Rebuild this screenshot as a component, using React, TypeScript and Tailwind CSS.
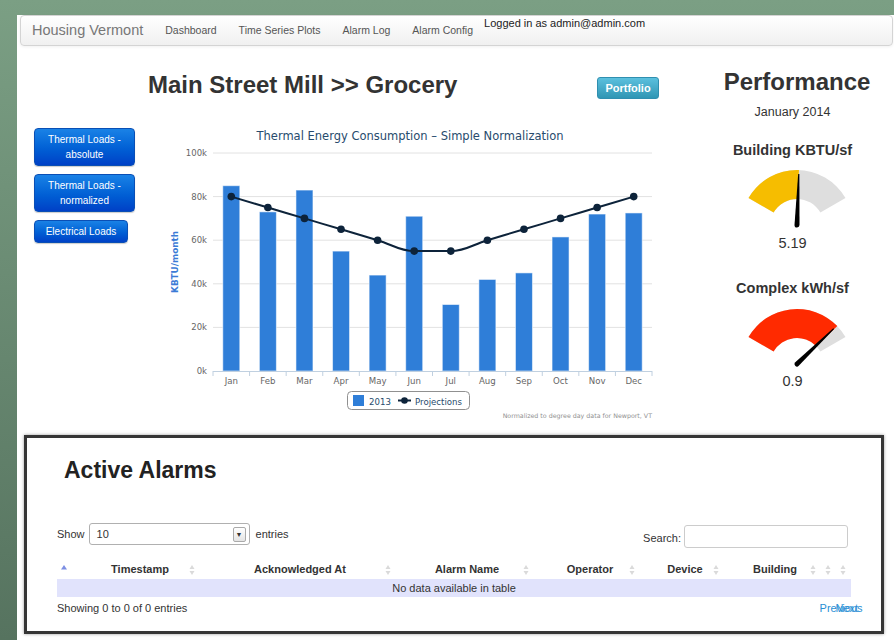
import React from 'react';

type Pt = [number, number];

const months = ['Jan', 'Feb', 'Mar', 'Apr', 'May', 'Jun', 'Jul', 'Aug', 'Sep', 'Oct', 'Nov', 'Dec'];
const usage2013 = [85, 73, 83, 55, 44, 71, 30.5, 42, 45, 61.5, 72, 72.5];
const projections = [80, 75, 70, 65, 60, 55, 55, 60, 65, 70, 75, 80];

// plot box inside the chart svg
const PL = 53;
const PR = 492;
const PB = 246;
const PX_PER_K = 2.18;
const CW = (PR - PL) / 12;

const yOf = (v: number) => PB - v * PX_PER_K;
const xOf = (i: number) => PL + CW * (i + 0.5);

// same smoothing as a highcharts spline series
const splinePath = (pts: Pt[]): string => {
    const sm = 1.5;
    const den = sm + 1;
    const conts = pts.map((p, i) => {
        const last = pts[i - 1];
        const next = pts[i + 1];
        if (!last || !next) return null;
        const lcx = (sm * p[0] + last[0]) / den;
        let lcy = (sm * p[1] + last[1]) / den;
        const rcx = (sm * p[0] + next[0]) / den;
        let rcy = (sm * p[1] + next[1]) / den;
        if (rcx !== lcx) {
            const corr = ((rcy - lcy) * (rcx - p[0])) / (rcx - lcx) + p[1] - rcy;
            lcy += corr;
            rcy += corr;
            if (lcy > last[1] && lcy > p[1]) {
                lcy = Math.max(last[1], p[1]);
                rcy = 2 * p[1] - lcy;
            } else if (lcy < last[1] && lcy < p[1]) {
                lcy = Math.min(last[1], p[1]);
                rcy = 2 * p[1] - lcy;
            }
            if (rcy > next[1] && rcy > p[1]) {
                rcy = Math.max(next[1], p[1]);
                lcy = 2 * p[1] - rcy;
            } else if (rcy < next[1] && rcy < p[1]) {
                rcy = Math.min(next[1], p[1]);
                lcy = 2 * p[1] - rcy;
            }
        }
        return { lcx, lcy, rcx, rcy };
    });
    let d = `M ${pts[0][0]} ${pts[0][1]}`;
    for (let i = 1; i < pts.length; i++) {
        const a = conts[i - 1];
        const b = conts[i];
        const c1 = a ? `${a.rcx} ${a.rcy}` : `${pts[i - 1][0]} ${pts[i - 1][1]}`;
        const c2 = b ? `${b.lcx} ${b.lcy}` : `${pts[i][0]} ${pts[i][1]}`;
        d += ` C ${c1} ${c2} ${pts[i][0]} ${pts[i][1]}`;
    }
    return d;
};

const ThermalChart: React.FC = () => {
    const linePts: Pt[] = projections.map((v, i) => [xOf(i), yOf(v)]);
    const font = "'DejaVu Sans', Verdana, sans-serif";

    return (
        <svg width="500" height="300" viewBox="0 0 500 300" fontFamily={font}>
            <text x="250" y="15" textAnchor="middle" fontSize="11.5" fill="#274b6d">
                Thermal Energy Consumption – Simple Normalization
            </text>

            {/* grid + y labels */}
            {[0, 20, 40, 60, 80, 100].map((v) => (
                <g key={v}>
                    {v > 0 && <line x1={PL} x2={PR} y1={yOf(v)} y2={yOf(v)} stroke="#e2e2e2" strokeWidth="1" />}
                    <text x="47" y={yOf(v) + 3} textAnchor="end" fontSize="8.5" fill="#666">
                        {v}k
                    </text>
                </g>
            ))}

            <text
                x="18"
                y="137"
                transform="rotate(-90 18 137)"
                textAnchor="middle"
                fontSize="8.8"
                fontWeight="bold"
                fill="#3b7bd6"
            >
                KBTU/month
            </text>

            {/* bars */}
            {usage2013.map((v, i) => (
                <rect
                    key={months[i]}
                    x={xOf(i) - 8.5}
                    y={yOf(v)}
                    width="17"
                    height={v * PX_PER_K}
                    fill="#2f7ed8"
                    stroke="#ffffff"
                    strokeOpacity="0.55"
                    strokeWidth="1"
                />
            ))}

            {/* x axis */}
            <line x1={PL} x2={PR} y1={PB + 0.5} y2={PB + 0.5} stroke="#c0d0e0" strokeWidth="1" />
            {Array.from({ length: 13 }).map((_, i) => (
                <line
                    key={i}
                    x1={PL + CW * i}
                    x2={PL + CW * i}
                    y1={PB}
                    y2={PB + 5}
                    stroke="#c0d0e0"
                    strokeWidth="1"
                />
            ))}
            {months.map((m, i) => (
                <text key={m} x={xOf(i)} y="259" textAnchor="middle" fontSize="8.6" fill="#666">
                    {m}
                </text>
            ))}

            {/* projections */}
            <path d={splinePath(linePts)} fill="none" stroke="#0d233a" strokeWidth="2" />
            {linePts.map(([x, y], i) => (
                <circle key={i} cx={x} cy={y} r="3.8" fill="#0d233a" />
            ))}

            {/* legend */}
            <rect x="187.5" y="266.5" width="122" height="18" rx="4" fill="#fff" stroke="#909090" strokeWidth="1" />
            <rect x="193" y="270" width="11" height="11" fill="#2f7ed8" />
            <text x="209" y="279.5" fontSize="8.6" fill="#274b6d">2013</text>
            <line x1="238" x2="251" y1="275.5" y2="275.5" stroke="#0d233a" strokeWidth="2" />
            <circle cx="244.5" cy="275.5" r="3.3" fill="#0d233a" />
            <text x="255" y="279.5" fontSize="8.6" fill="#274b6d">Projections</text>

            <text x={PR} y="293" textAnchor="end" fontSize="6.3" fill="#909090">
                Normalized to degree day data for Newport, VT
            </text>
        </svg>
    );
};

interface GaugeProps {
    fill: string;
    angle: number; // needle / fill end, degrees from vertical
    cy: number;
}

const pol = (cx: number, cy: number, r: number, a: number): Pt => {
    const rad = (a * Math.PI) / 180;
    return [cx + r * Math.sin(rad), cy - r * Math.cos(rad)];
};

const band = (cx: number, cy: number, ro: number, ri: number, a0: number, a1: number) => {
    const large = a1 - a0 > 180 ? 1 : 0;
    const [x1, y1] = pol(cx, cy, ro, a0);
    const [x2, y2] = pol(cx, cy, ro, a1);
    const [x3, y3] = pol(cx, cy, ri, a1);
    const [x4, y4] = pol(cx, cy, ri, a0);
    return `M ${x1} ${y1} A ${ro} ${ro} 0 ${large} 1 ${x2} ${y2} L ${x3} ${y3} A ${ri} ${ri} 0 ${large} 0 ${x4} ${y4} Z`;
};

const Gauge: React.FC<GaugeProps> = ({ fill, angle, cy }) => {
    const cx = 60;
    const ro = 56;
    const ri = 27;
    return (
        <svg width="120" height="68" viewBox="0 0 120 68">
            <path d={band(cx, cy, ro, ri, -60, 60)} fill="#dedede" />
            <path d={band(cx, cy, ro, ri, -60, angle)} fill={fill} />
            <g transform={`translate(${cx} ${cy - 1}) rotate(${angle})`}>
                <path d="M -2.5 0 L -0.6 -51 L 0.6 -51 L 2.5 0 A 2.5 2.5 0 0 1 -2.5 0 Z" fill="#000" />
            </g>
        </svg>
    );
};

const SortIcon: React.FC<{ asc?: boolean }> = ({ asc }) =>
    asc ? (
        <svg width="6" height="10" viewBox="0 0 6 10">
            <path d="M3 0 L6 4.5 L0 4.5 Z" fill="#7d8fe3" />
        </svg>
    ) : (
        <svg width="6" height="10" viewBox="0 0 6 10">
            <path d="M3 0 L5.5 4 L0.5 4 Z" fill="#dadada" />
            <path d="M0.5 6 L5.5 6 L3 10 Z" fill="#dadada" />
        </svg>
    );

const columns = [
    { label: '', w: 'w-[13px]', pl: 'pl-0', asc: true },
    { label: 'Timestamp', w: 'w-[128px]', pl: 'pl-[24px]' },
    { label: 'Acknowledged At', w: 'w-[196px]', pl: 'pl-[20px]' },
    { label: 'Alarm Name', w: 'w-[138px]', pl: 'pl-[20px]' },
    { label: 'Operator', w: 'w-[106px]', pl: 'pl-[22px]' },
    { label: 'Device', w: 'w-[84px]', pl: 'pl-[22px]' },
    { label: 'Building', w: 'w-[97px]', pl: 'pl-[21px]' },
    { label: '', w: 'w-[15px]', pl: 'pl-0' },
    { label: '', w: 'w-[15px]', pl: 'pl-0' },
];

const loadButtons = [
    { lines: ['Thermal Loads -', 'absolute'], w: 'w-[101px]' },
    { lines: ['Thermal Loads -', 'normalized'], w: 'w-[101px]' },
    { lines: ['Electrical Loads'], w: 'w-[94px]' },
];

const App: React.FC = () => {
    return (
        <div className="h-[640px] w-[894px] overflow-hidden bg-gradient-to-b from-[#7b9f84] to-[#56735f] pl-[17px] pt-[7px] font-['Liberation_Sans',Arial,sans-serif] text-[#333]">
            <div className="h-full bg-white">
                {/* navbar */}
                <nav className="ml-[3px] mr-[1px] mt-[8px] flex h-[31px] items-center rounded-[4px] border border-[#d4d4d4] bg-gradient-to-b from-white to-[#f0f0f0] pl-[11px] shadow-[0_1px_3px_rgba(0,0,0,0.06)]">
                    <span className="mr-[22px] text-[14.5px] text-[#777]">Housing Vermont</span>
                    <div className="flex gap-[22px] text-[10.5px] text-[#555]">
                        <span>Dashboard</span>
                        <span>Time Series Plots</span>
                        <span>Alarm Log</span>
                        <span>Alarm Config</span>
                    </div>
                    <span className="mb-[14px] ml-[11px] text-[11px] text-[#222]">Logged in as admin@admin.com</span>
                </nav>

                <div className="flex h-[381px]">
                    {/* load selectors */}
                    <div className="flex w-[131px] flex-col items-start gap-[8px] pl-[17px] pt-[82px]">
                        {loadButtons.map((b) => (
                            <button
                                key={b.lines.join(' ')}
                                className={`${b.w} rounded-[4px] border border-[#0a4fb5] bg-gradient-to-b from-[#1a82e6] to-[#0040c6] py-[3px] text-center text-[10px] leading-[15px] text-white shadow-[0_1px_1px_rgba(0,0,0,0.2)]`}
                            >
                                {b.lines.map((l) => (
                                    <div key={l}>{l}</div>
                                ))}
                            </button>
                        ))}
                    </div>

                    {/* title + chart */}
                    <div className="w-[552px] pt-[25px]">
                        <div className="flex w-[511px] items-start justify-between">
                            <h1 className="text-[24px] font-bold leading-[28px] text-[#333]">Main Street Mill &gt;&gt; Grocery</h1>
                            <button className="mt-[6px] h-[22px] w-[62px] rounded-[3px] border border-[#2f8fb0] bg-gradient-to-b from-[#5bc0de] to-[#2f96b4] text-[11px] font-bold text-white">
                                Portfolio
                            </button>
                        </div>
                        <div className="ml-[12px] mt-[26px]">
                            <ThermalChart />
                        </div>
                    </div>

                    {/* performance gauges */}
                    <div className="flex flex-1 flex-col items-center pt-[22px]">
                        <h2 className="text-[24px] font-bold leading-[28px] text-[#333]">Performance</h2>
                        <div className="mr-[9px] mt-[8px] text-[12.5px] leading-[16px]">January 2014</div>
                        <div className="mr-[9px] mt-[21px] text-[14.5px] font-bold leading-[18px]">Building KBTU/sf</div>
                        <div className="mt-[7px]">
                            <Gauge fill="#f6bd00" angle={2} cy={60} />
                        </div>
                        <div className="mr-[9px] text-[14.5px] leading-[18px]">5.19</div>
                        <div className="mr-[9px] mt-[27px] text-[14.5px] font-bold leading-[18px]">Complex kWh/sf</div>
                        <div className="mt-[7px]">
                            <Gauge fill="#ff2a00" angle={46} cy={61} />
                        </div>
                        <div className="mr-[9px] text-[14.5px] leading-[18px]">0.9</div>
                    </div>
                </div>

                {/* alarms */}
                <div className="ml-[7px] mt-[8px] h-[199px] w-[860px] border-[3px] border-[#363636] shadow-[0_0_3px_rgba(0,0,0,0.4)]">
                    <h2 className="pl-[37px] pt-[18px] text-[23px] font-bold leading-[28px] text-[#222]">Active Alarms</h2>

                    <div className="ml-[30px] mr-[30px] mt-[39px] text-[11px]">
                        <div className="flex h-[22px] items-center justify-between">
                            <div className="flex items-center">
                                <span>Show</span>
                                <div className="ml-[4px] flex h-[22px] w-[161px] items-center justify-between rounded-[3px] border border-[#b0b0b0] bg-white pl-[7px] pr-[3px]">
                                    <span>10</span>
                                    <span className="flex h-[15px] w-[13px] items-center justify-center rounded-[2px] border border-[#aaa] bg-gradient-to-b from-white to-[#e4e4e4] text-[7px] leading-none">
                                        ▼
                                    </span>
                                </div>
                                <span className="ml-[6px]">entries</span>
                            </div>
                            <div className="mr-[3px] mt-[4px] flex items-center">
                                <span className="mt-[4px]">Search:</span>
                                <div className="ml-[3px] h-[23px] w-[164px] rounded-[3px] border border-[#ccc] bg-white" />
                            </div>
                        </div>

                        <div className="mt-[15px] flex h-[19px] items-center font-bold">
                            {columns.map((c, i) => (
                                <div key={i} className={`${c.w} flex items-center`}>
                                    <span className={`flex-1 text-center ${c.pl}`}>{c.label}</span>
                                    <span className="flex w-[12px] justify-center">
                                        <SortIcon asc={c.asc} />
                                    </span>
                                </div>
                            ))}
                        </div>
                        <div className="flex h-[18px] items-center justify-center bg-[#e1e3fc]">No data available in table</div>

                        <div className="mt-[3px] flex h-[16px] items-center justify-between">
                            <span>Showing 0 to 0 of 0 entries</span>
                            <span className="-mr-[7px] flex text-[#2a8fd5]">
                                <span>Previous</span>
                                <span className="-ml-[27px]">Next</span>
                            </span>
                        </div>
                    </div>
                </div>
            </div>
        </div>
    );
};

export default App;
